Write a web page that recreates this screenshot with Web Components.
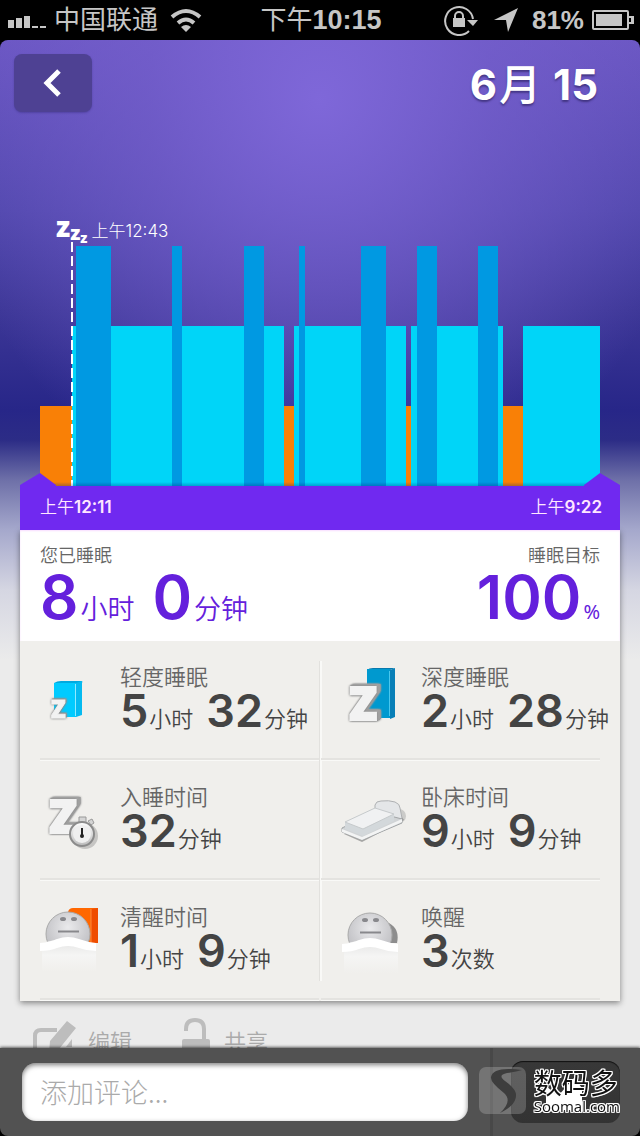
<!DOCTYPE html>
<html lang="zh-CN">
<head>
<meta charset="utf-8">
<meta name="viewport" content="width=device-width, initial-scale=1">
<title>6月 15</title>
<style>
    :root {
        --accent: #7029f0;
        --accent-text: #6420dc;
        --light: #00d5f8;
        --deep: #0099e2;
        --awake: #f98006;
        --number-font: Inter, "Noto Sans CJK SC", sans-serif;
    }
    body {
        margin: 0;
        background: #000;
        font-family: "Noto Sans CJK SC", sans-serif;
        font-weight: 350;
    }
</style>
</head>
<body>
<sleep-app></sleep-app>

<script>
/**
 * Base class: clones the given markup into an open shadow root.
 */
class BaseElement extends HTMLElement {
    constructor(html) {
        super();
        const template = document.createElement('template');
        template.innerHTML = html;
        this.attachShadow({ mode: 'open' });
        this.shadowRoot.appendChild(template.content.cloneNode(true));
    }
}

class StatusBar extends BaseElement {
    constructor() {
        super(`
<style>
    :host {
        display: grid;
        grid-template-columns: 1fr auto 1fr;
        align-items: center;
        height: 40px;
        padding: 0 6px 0 8px;
        color: #c6c6c6;
        font: 400 26px/40px "Liberation Sans", "Noto Sans CJK SC", sans-serif;
        white-space: nowrap;
    }
    div {
        display: flex;
        align-items: center;
        gap: 8px;
    }
    .wifi { margin-left: 4px; }
    .right { justify-content: flex-end; }
    .arrow { margin: 0 6px 0 8px; }
    b { font-weight: 700; }
    .time b { font-size: 27px; }
    svg { flex: none; fill: currentColor; }
</style>
<div>
    <svg width="38" height="16"><path d="M0 8h6v8H0zM8 6h6v10H8zM16 4h6v12h-6zM24 14h6v2h-6zM32 14h6v2h-6z"/></svg>
    <span>中国联通</span>
    <svg class="wifi" width="32" height="24" viewBox="0 0 32 24">
        <g fill="none" stroke="currentColor" stroke-width="4"><path d="M2 9Q16-3 30 9M8 15Q16 8 24 15"/></g>
        <path d="M11 19q5-4 10 0l-5 5z"/>
    </svg>
</div>
<span class="time">下午<b>10:15</b></span>
<div class="right">
    <svg width="34" height="32" viewBox="0 0 34 32">
        <path d="M25 27A14 14 0 1 1 29 15" fill="none" stroke="currentColor" stroke-width="2"/>
        <path d="M23 16h11l-5 6zM9 14h12v9H9z"/>
        <path d="M11 15v-3a4 4 0 0 1 8 0v3" fill="none" stroke="currentColor" stroke-width="2"/>
    </svg>
    <svg class="arrow" width="24" height="24"><path d="M24 0 14 24 12 12 0 12z"/></svg>
    <b>81%</b>
    <svg width="42" height="22">
        <rect x="1" y="2" width="35" height="18" rx="1" fill="none" stroke="currentColor" stroke-width="2"/>
        <path d="M4 5h26v12H4zM37 7h5v8h-5v-2h2v-4h-2z"/>
    </svg>
</div>
`);
    }
}
customElements.define('status-bar', StatusBar);

class PageHeader extends BaseElement {
    constructor() {
        super(`
<style>
    :host {
        display: flex;
        justify-content: space-between;
        align-items: center;
        padding: 12px 42px 12px 14px;
    }
    button {
        display: grid;
        place-items: center;
        width: 78px;
        height: 58px;
        padding: 0;
        border: 0;
        border-radius: 8px;
        background: #4e4193;
        box-shadow: 0 1px 2px rgba(50, 40, 120, 0.4);
    }
    h1 {
        margin: 0;
        padding-top: 4px;
        color: #fff;
        font: 700 42px/58px var(--number-font);
        text-shadow: 0 2px 2px rgba(40, 30, 90, 0.6);
    }
    h1 ::slotted(span) {
        margin: 0 2px;
        font-weight: 500;
    }
</style>
<button type="button" aria-label="返回">
    <svg width="20" height="30" viewBox="0 0 20 30"><path d="M16 3 4 15l12 12" fill="none" stroke="#fff" stroke-width="5"/></svg>
</button>
<h1><slot></slot></h1>
`);
    }
}
customElements.define('page-header', PageHeader);

// [phase, minutes on the chart's own scale]
const PHASES = [
    ['awake', 32], ['light', 4], ['deep', 35], ['light', 61], ['deep', 10], ['light', 62],
    ['deep', 20], ['light', 20], ['awake', 10], ['light', 5], ['deep', 6], ['light', 56],
    ['deep', 25], ['light', 20], ['awake', 5], ['light', 6], ['deep', 20], ['light', 41],
    ['deep', 20], ['light', 5], ['awake', 20], ['light', 77]
];

class SleepChart extends BaseElement {
    constructor() {
        super(`
<style>
    :host {
        display: block;
        padding: 120px 20px 0;
    }
    .plot {
        position: relative;
        display: flex;
        align-items: flex-end;
        height: 240px;
        margin: 0 20px;
    }
    .bar { flex: 1 1 0; }
    .awake { height: 80px; background: var(--awake); }
    .light { height: 160px; background: var(--light); }
    .deep { height: 240px; background: var(--deep); }
    .marker {
        position: absolute;
        left: calc(100% * 31 / 560);
        bottom: 0;
        width: 2px;
        height: 244px;
        background: repeating-linear-gradient(#fff 0 10px, transparent 10px 14px);
    }
    .start {
        position: absolute;
        left: 16px;
        bottom: 241px;
        display: flex;
        align-items: flex-end;
        color: #fff;
        font: 300 17px/28px var(--number-font);
        white-space: nowrap;
    }
    .zzz {
        display: flex;
        align-items: flex-start;
        margin-right: 4px;
        font-family: "Open Sans", sans-serif;
        font-weight: 800;
        height: 28px;
    }
    .zzz i { font-style: normal; }
    .zzz i:nth-child(1) { font-size: 28px; line-height: 18px; }
    .zzz i:nth-child(2) { font-size: 20px; line-height: 32px; }
    .zzz i:nth-child(3) { font-size: 14px; line-height: 42px; }
    .axis {
        position: relative;
        display: flex;
        justify-content: space-between;
        padding: 0 18px 0 20px;
        background: var(--accent);
        color: #ffe6ff;
        font: 350 17px/42px var(--number-font);
        height: 44px;
        box-sizing: border-box;
    }
    .axis b { font-weight: 600; }
    .axis svg {
        position: absolute;
        bottom: 100%;
        left: 0;
        fill: var(--accent);
    }
    .axis svg:last-child {
        left: auto;
        right: 0;
        transform: scaleX(-1);
    }
    .axis::before {
        content: "";
        position: absolute;
        inset: -4px 20px auto;
        height: 4px;
        background: linear-gradient(transparent, rgba(0, 40, 120, 0.3));
    }
</style>
<div class="plot">
    <div class="marker"></div>
    <div class="start"><span class="zzz"><i>z</i><i>z</i><i>z</i></span><span>上午12:43</span></div>
</div>
<div class="axis">
    <svg width="36" height="13"><path d="M0 13V12L20 0 36 12V13z"/></svg>
    <span>上午<b>12:11</b></span>
    <span>上午<b>9:22</b></span>
    <svg width="36" height="13"><path d="M0 13V12L20 0 36 12V13z"/></svg>
</div>
`);
        const plot = this.shadowRoot.querySelector('.plot');
        const marker = this.shadowRoot.querySelector('.marker');
        PHASES.forEach(([phase, span]) => {
            const bar = document.createElement('div');
            bar.className = `bar ${phase}`;
            bar.style.flexGrow = span;
            plot.insertBefore(bar, marker);
        });
    }
}
customElements.define('sleep-chart', SleepChart);

class SleepSummary extends BaseElement {
    constructor() {
        super(`
<style>
    :host {
        display: flex;
        justify-content: space-between;
        height: 111px;
        padding: 0 20px;
        box-sizing: border-box;
        background: #fff;
        color: var(--accent-text);
        box-shadow: inset 0 1px 2px #f8dcff;
    }
    h2 {
        margin: 0;
        padding-top: 11px;
        color: #666;
        font-size: 18px;
        line-height: 26px;
        font-weight: 350;
    }
    p {
        display: flex;
        align-items: baseline;
        gap: 2px;
        margin: 0;
        font-size: 27px;
        line-height: 60px;
    }
    b {
        font: 600 60px/60px var(--number-font);
    }
    .second { margin-left: 16px; }
    .goal { text-align: right; }
    .goal p { justify-content: flex-end; }
    .goal small { font: 400 20px/60px "Noto Sans", sans-serif; }
</style>
<div>
    <h2>您已睡眠</h2>
    <p><b>8</b>小时<b class="second">0</b>分钟</p>
</div>
<div class="goal">
    <h2>睡眠目标</h2>
    <p><b>100</b><small>%</small></p>
</div>
`);
    }
}
customElements.define('sleep-summary', SleepSummary);

const ICONS = {
    lightSleep: `
        <path d="M14 18q3-2 7-2h20l2 1-5 2H14z" fill="#00a9df"/>
        <path d="M14 18h22v34H14z" fill="#00cbff"/><path d="M36 18l6-2v34l-6 2z" fill="#05baf0"/>
        <path d="M35.500 19v32" stroke="#91eaff"/>
        <text class="z small" x="11" y="53" font-size="24">Z</text>`,
    deepSleep: `
        <path d="M26 5q2-2 6-2h22l-5 2z" fill="#0879ad"/>
        <path d="M26 4h23v49H26z" fill="#0099cf"/><path d="M49 5l5-2v49l-5 2z" fill="#087fb7"/>
        <path d="M48.500 6v45" stroke="#49c7ee"/>
        <text class="z" x="8" y="55" font-size="46">Z</text>`,
    fallAsleep: `
        <text class="z" x="9" y="48" font-size="46">Z</text>
        <ellipse cx="45" cy="51" rx="13" ry="13" fill="#888" opacity=".4"/>
        <path d="M39 32h7v7h-7zM48 36l4-2 2 4-3 2z" fill="#d5d5d5" stroke="#999"/>
        <circle cx="42" cy="49" r="12" fill="url(#steel)" stroke="#8b8b8b" stroke-width="2"/>
        <circle cx="42" cy="49" r="9" fill="#efefef"/>
        <path d="M42 43v8" stroke="#222" stroke-width="2"/><circle cx="42" cy="51" r="2" fill="#222"/>`,
    bed: `
        <ellipse cx="58" cy="31" rx="7" ry="7" fill="#777" opacity=".3"/>
        <path d="M3 49l18 8 42-22-3-4z" fill="#777" opacity=".6"/>
        <path d="M34 30V20q1-4 6-4 8-1 14 1 5 2 5 6l2 10-4 5z" fill="#e4e6e8" stroke="#aeb0b2"/>
        <path d="M1 43l33-16 27 7v4L21 55 1 47z" fill="#d0d3d5" stroke="#a2a5a7"/>
        <path d="M4 37l18 7v7L4 44zM22 44l31-15v7L22 51z" fill="#d3d8db"/>
        <path d="M4 37 34 23l19 6-31 15z" fill="#f0f1f2" stroke="#c6cacc"/>
        <path d="M1 44l20 8 40-18v3L21 55 1 47z" fill="#f3f4f4"/>`,
    awake: `
        <path d="M28 7q1-4 5-4h25v35H28z" fill="#ff6700"/><path d="M51 4l7-1v35h-7z" fill="#ef4d00"/>
        <path d="M51 4v34" stroke="#ff8a3c"/>
        <use href="#face" y="1"/>`,
    wakeUps: `
        <path d="M48 18q11 6 8 20H44z" fill="#8d8d8d"/>
        <use href="#face" x="1" y="2"/>`
};

class StatTile extends BaseElement {
    constructor() {
        super(`
<style>
    :host {
        display: flex;
        padding: 20px 0 0 20px;
        box-sizing: border-box;
        color: #444;
    }
    .icon {
        flex: none;
        width: 70px;
        height: 70px;
        margin: 4px 10px 0 0;
        overflow: visible;
    }
    .z {
        font-family: "Open Sans", sans-serif;
        font-weight: 800;
        fill: #f2f2f2;
        stroke: #f2f2f2;
        stroke-width: 2;
        filter: drop-shadow(0 0 1px #777) drop-shadow(1px -1px 0 #a8a8a8) drop-shadow(2px -1px 0 #a0a0a0) drop-shadow(1px 0 0 #999);
    }
    .small {
        stroke-width: 1;
        filter: drop-shadow(0 0 1px #777) drop-shadow(1px -1px 0 #999);
    }
    h3 {
        margin: 0;
        color: #666;
        font-size: 22px;
        line-height: 28px;
        font-weight: 350;
    }
    p {
        display: flex;
        align-items: baseline;
        gap: 1px;
        margin: 0;
        font-size: 22px;
        line-height: 44px;
        white-space: nowrap;
    }
    b {
        font: 600 45px/44px var(--number-font);
    }
    span + b { margin-left: 12px; }
</style>
<svg class="icon" viewBox="0 0 70 70">
    <defs>
        <radialGradient id="skin" cx=".5" cy=".35" r=".7"><stop stop-color="#eaeaec"/><stop offset="1" stop-color="#b8b8bc"/></radialGradient>
        <linearGradient id="sheet" x2="0" y2="1"><stop stop-color="#e2e2e2"/><stop offset=".5" stop-color="#f5f5f4"/><stop offset="1" stop-color="#f0efec"/></linearGradient>
        <linearGradient id="steel" x2="0" y2="1"><stop stop-color="#fff"/><stop offset="1" stop-color="#bbb"/></linearGradient>
        <g id="face">
            <circle cx="28" cy="28" r="22" fill="url(#skin)" stroke="#aaa"/>
            <ellipse cx="23" cy="13" rx="3" ry="2" fill="#88888c"/><ellipse cx="34" cy="13" rx="3" ry="2" fill="#88888c"/>
            <path d="M18 25.500h21" stroke="#88888c" stroke-width="2"/>
            <path d="M2 38q26-12 54 2v26H2z" fill="url(#sheet)"/>
            <path d="M0 37q10-1 17-4 11-4 22 0 8 3 17 4v8q-9 0-17-3-11-4-22 0-7 3-17 3z" fill="#fff"/>
        </g>
    </defs>
    <g id="art"></g>
</svg>
<div>
    <h3></h3>
    <p></p>
</div>
`);
    }

    connectedCallback() {
        this.shadowRoot.querySelector('#art').innerHTML = ICONS[this.getAttribute('icon')];
        this.shadowRoot.querySelector('h3').textContent = this.getAttribute('label');
        // "5 小时 32 分钟" -> number, unit, number, unit
        this.shadowRoot.querySelector('p').innerHTML = this.getAttribute('value')
            .split(' ')
            .map((part, i) => (i % 2 ? `<span>${part}</span>` : `<b>${part}</b>`))
            .join('');
    }
}
customElements.define('stat-tile', StatTile);

class StatGrid extends BaseElement {
    constructor() {
        super(`
<style>
    :host {
        display: grid;
        grid-template-columns: 1fr 1fr;
        grid-auto-rows: 120px;
        column-gap: 2px;
        background:
            linear-gradient(90deg, #e2e1de 1px, #f9f9f7 1px) 50% 20px / 3px 320px no-repeat,
            #f0efec;
    }
    ::slotted(stat-tile) {
        background: linear-gradient(#e4e3e0 2px, #f9f9f7 2px) 100% 100% / calc(100% - 20px) 3px no-repeat;
    }
    ::slotted(stat-tile:nth-child(even)) {
        background-position: 0 100%;
    }
</style>
<slot></slot>
`);
    }
}
customElements.define('stat-grid', StatGrid);

class EntryActions extends BaseElement {
    constructor() {
        super(`
<style>
    :host {
        display: flex;
        gap: 48px;
        padding: 14px 32px 20px;
    }
    button {
        display: flex;
        align-items: center;
        gap: 10px;
        padding: 0;
        border: 0;
        background: none;
        color: #aaa;
        font: 350 22px/50px "Noto Sans CJK SC", sans-serif;
    }
    svg { fill: #bdbdbd; }
</style>
<button type="button">
    <svg width="46" height="46" viewBox="0 0 46 46">
        <path d="M25 13H9q-6 0-6 6v20q0 5 6 5h22q6 0 6-5v-8" fill="none" stroke="#bdbdbd" stroke-width="4"/>
        <path d="M35 4l9 7-17 21-10 4 1-12zM40 22l-6 8h6z"/>
    </svg>
    编辑
</button>
<button type="button">
    <svg width="34" height="46" viewBox="0 0 34 46">
        <path d="M6 14V12q0-9 9-9t9 9v14" fill="none" stroke="#bdbdbd" stroke-width="4"/>
        <path d="M2 24q0-2 2-2h24q2 0 2 2v20H2z"/>
    </svg>
    共享
</button>
`);
    }
}
customElements.define('entry-actions', EntryActions);

class SoomalMark extends BaseElement {
    constructor() {
        super(`
<style>
    :host {
        display: flex;
        align-items: center;
        gap: 8px;
        color: #111;
        white-space: nowrap;
        pointer-events: none;
        text-shadow: 1px 0 #fff, -1px 0 #fff, 0 1px #fff, 0 -1px #fff, 1px 1px #fff, -1px -1px #fff, 1px -1px #fff, -1px 1px #fff;
    }
    div { display: grid; }
    span { font: 400 28px/32px "Noto Sans CJK SC", sans-serif; }
    small { font: 500 15px/16px "Open Sans", sans-serif; }
</style>
<svg width="47" height="47" viewBox="0 0 47 47">
    <rect width="47" height="47" rx="7" fill="#fff" opacity=".2"/>
    <path d="M43 3Q14-1 12 10q-1 5 13 16 9 8-4 20 17-8 16-19-1-6-11-13-8-6 2-8 8-1 15-3z" fill="#3d3d3d"/>
</svg>
<div><span>数码多</span><small>Soomal.com</small></div>
`);
    }
}
customElements.define('soomal-mark', SoomalMark);

class CommentBar extends BaseElement {
    constructor() {
        super(`
<style>
    :host {
        position: relative;
        display: flex;
        align-items: center;
        height: 88px;
        padding: 0 20px 0 22px;
        box-sizing: border-box;
        background: #525252;
        border-radius: 0 0 8px 8px;
        box-shadow: 0 -1px 3px rgba(0, 0, 0, 0.6);
    }
    input {
        flex: 1;
        min-width: 0;
        height: 58px;
        padding: 0 18px;
        box-sizing: border-box;
        border: 0;
        border-radius: 14px;
        background: #fff;
        box-shadow: inset 0 2px 5px rgba(0, 0, 0, 0.5);
        font: 300 27px/58px "Noto Sans CJK SC", sans-serif;
    }
    input::placeholder { color: #aaa; opacity: 1; }
    .rule {
        align-self: stretch;
        width: 3px;
        margin: 0 18px 0 22px;
        background: #484848;
    }
    button {
        display: grid;
        place-items: center;
        width: 109px;
        height: 62px;
        padding: 0;
        border: 0;
        border-radius: 12px;
        background: linear-gradient(#383838, #333);
        box-shadow: inset 0 1px 1px #111;
    }
    soomal-mark {
        position: absolute;
        right: 20px;
        top: 18px;
    }
</style>
<input type="text" placeholder="添加评论..." aria-label="添加评论">
<div class="rule"></div>
<button type="button" aria-label="发送">
    <svg width="44" height="40"><path d="M2 14 14 24 30 6l8 10v22H2z" fill="#fff"/></svg>
</button>
<soomal-mark></soomal-mark>
`);
    }
}
customElements.define('comment-bar', CommentBar);

class SleepApp extends BaseElement {
    constructor() {
        super(`
<style>
    :host {
        display: flex;
        flex-direction: column;
        height: 100vh;
    }
    main {
        flex: 1;
        min-height: 0;
        overflow: hidden auto;
        scrollbar-width: none;
        border-radius: 8px 8px 0 0;
        background: #ebebeb;
    }
    .page {
        background:
            radial-gradient(ellipse 60% 420px at 50% 60px, rgba(130, 106, 220, 0.9), rgba(118, 96, 206, 0.65) 45%, rgba(110, 90, 200, 0)) 0 0 / 100% 480px no-repeat,
            linear-gradient(#6a56c2, #5047ac 170px, #3d3797 270px, #272688 370px, #2c2c86 400px, #6e70a8 440px, #a5a8cc 490px, #d5d6e2 550px, #ebebeb 620px);
    }
    .panel {
        margin: 0 20px;
        box-shadow: 0 2px 6px rgba(0, 0, 0, 0.45);
    }
</style>
<status-bar></status-bar>
<main>
    <div class="page">
        <page-header>6<span>月</span> 15</page-header>
        <sleep-chart></sleep-chart>
        <div class="panel">
            <sleep-summary></sleep-summary>
            <stat-grid>
                <stat-tile icon="lightSleep" label="轻度睡眠" value="5 小时 32 分钟"></stat-tile>
                <stat-tile icon="deepSleep" label="深度睡眠" value="2 小时 28 分钟"></stat-tile>
                <stat-tile icon="fallAsleep" label="入睡时间" value="32 分钟"></stat-tile>
                <stat-tile icon="bed" label="卧床时间" value="9 小时 9 分钟"></stat-tile>
                <stat-tile icon="awake" label="清醒时间" value="1 小时 9 分钟"></stat-tile>
                <stat-tile icon="wakeUps" label="唤醒" value="3 次数"></stat-tile>
            </stat-grid>
        </div>
        <entry-actions></entry-actions>
    </div>
</main>
<comment-bar></comment-bar>
`);
    }
}
customElements.define('sleep-app', SleepApp);
</script>
</body>
</html>
